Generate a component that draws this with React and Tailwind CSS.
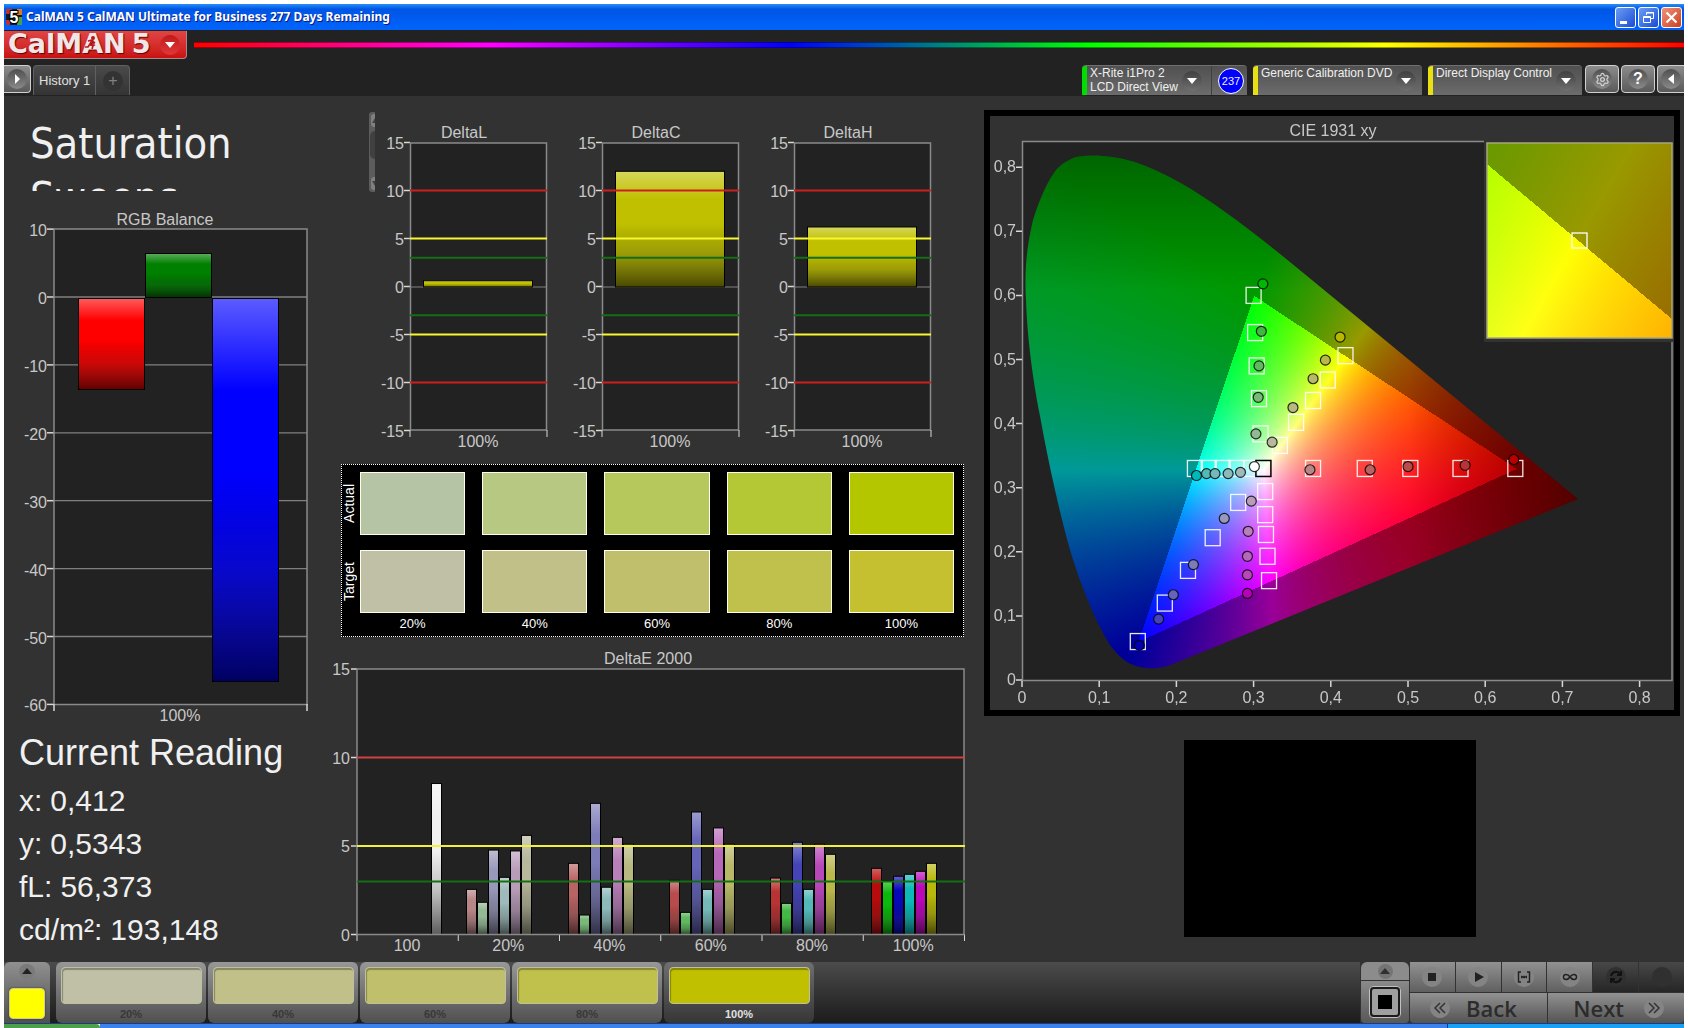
import React, { useEffect, useRef } from 'react';
import { Settings } from 'lucide-react';

const SATURATIONS = ['20%', '40%', '60%', '80%', '100%'];
const ACTUAL = ['#b6c4a6', '#b6c882', '#b6c85c', '#b4c836', '#b4c600'];
const TARGET = ['#c0c0a6', '#c0c088', '#c0c06c', '#c0c04c', '#c4c030'];
const STEPS = ['#c0c0a6', '#c0c088', '#c0c06c', '#c0c04c', '#c0c000'];

const READINGS = [
  { label: 'x', value: '0,412' },
  { label: 'y', value: '0,5343' },
  { label: 'fL', value: '56,373' },
  { label: 'cd/m²', value: '193,148' },
];

const DELTA_E = [
  { label: '100', bars: [[6, 8.53, '#f0f0f0']] },
  {
    label: '20%',
    bars: [[0, 2.55, '#b88686'], [1, 1.82, '#94b894'], [2, 4.77, '#9898ba'], [3, 3.23, '#9ebaba'], [4, 4.72, '#b89cb8'], [5, 5.6, '#b8b89c']],
  },
  {
    label: '40%',
    bars: [[0, 4.02, '#b86464'], [1, 1.1, '#78b878'], [2, 7.41, '#7c7cb8'], [3, 2.67, '#8cbaba'], [4, 5.49, '#b880b8'], [5, 5.1, '#b8b880']],
  },
  {
    label: '60%',
    bars: [[0, 3.06, '#b84c4c'], [1, 1.25, '#60b860'], [2, 6.92, '#6464b8'], [3, 2.55, '#74b8b8'], [4, 6.02, '#b868b8'], [5, 5.1, '#b8b868']],
  },
  {
    label: '80%',
    bars: [[0, 3.19, '#b83434'], [1, 1.76, '#44b844'], [2, 5.21, '#4444b8'], [3, 2.55, '#54b8b8'], [4, 5.1, '#b848b8'], [5, 4.53, '#b8b84c']],
  },
  {
    label: '100%',
    bars: [[0, 3.74, '#b80c0c'], [1, 3.05, '#0cb80c'], [2, 3.29, '#0808b8'], [3, 3.4, '#0cb8b8'], [4, 3.57, '#b808b8'], [5, 4.02, '#b8b80c']],
  },
];

const CIE_TARGETS = [
  [0.3, 0.6], [0.302, 0.542], [0.304, 0.49], [0.307, 0.439], [0.309, 0.384],
  [0.419, 0.506], [0.396, 0.468], [0.377, 0.436], [0.355, 0.402], [0.334, 0.366],
  [0.224, 0.33], [0.242, 0.33], [0.26, 0.33], [0.278, 0.33], [0.297, 0.33],
  [0.28, 0.277], [0.247, 0.222], [0.215, 0.171], [0.185, 0.12], [0.15, 0.06],
  [0.315, 0.294], [0.315, 0.258], [0.316, 0.227], [0.318, 0.193], [0.32, 0.155],
  [0.377, 0.33], [0.444, 0.33], [0.503, 0.33], [0.568, 0.33], [0.639, 0.33],
];

const CIE_READINGS = [
  [0.312, 0.618, '#00b800'], [0.31, 0.544, '#40b840'], [0.307, 0.49, '#60b860'], [0.306, 0.441, '#78b878'], [0.303, 0.384, '#94b894'],
  [0.412, 0.535, '#b8b800'], [0.393, 0.499, '#b8b84c'], [0.377, 0.47, '#b8b868'], [0.351, 0.425, '#b8b880'], [0.324, 0.371, '#b8b89c'],
  [0.226, 0.319, '#00b8b8'], [0.239, 0.322, '#54b8b8'], [0.25, 0.322, '#74b8b8'], [0.267, 0.322, '#8cbaba'], [0.283, 0.324, '#9ebaba'],
  [0.262, 0.252, '#9898ba'], [0.222, 0.18, '#7c7cb8'], [0.196, 0.133, '#6464b8'], [0.177, 0.095, '#4444b8'], [0.152, 0.054, '#0000b0'],
  [0.297, 0.279, '#b89cb8'], [0.293, 0.232, '#b880b8'], [0.292, 0.193, '#b868b8'], [0.292, 0.164, '#b848b8'], [0.292, 0.135, '#b800b8'],
  [0.373, 0.328, '#b88686'], [0.451, 0.328, '#b86464'], [0.5, 0.333, '#b84c4c'], [0.574, 0.335, '#b83434'], [0.637, 0.344, '#b80000'],
  [0.301, 0.333, '#ffffff'],
];

// plot area of the chromaticity chart, in view box units
const CIE = { w: 684, h: 594, left: 32, top: 25, right: 682, bottom: 564, sx: 772, sy: 641 };
const INSET = { x: 497, y: 27, w: 185, h: 195, cx: 0.42, cy: 0.505, span: 0.052 };
const LOCUS =
  'M86 41 C80 43 72 47 66 54 C57 66 50 82 43 104 C35 138 35 160 36 184 C37 214 41 254 50 300 C59 350 70 398 80 434 C92 474 106 506 120 529 C134 548 144 550 156 552 C166 553 172 552 183 548 L588 383 L418 243 L300 146 C268 120 242 100 215 82 C185 62 150 44 122 41 C110 39 96 39 86 41 Z';

const cieX = (x) => CIE.left + x * CIE.sx;
const cieY = (y) => CIE.bottom - y * CIE.sy;

function xyColor(x, y) {
  const yy = Math.max(y, 0.001);
  const X = x / yy;
  const Z = (1 - x - yy) / yy;
  const lin = [
    3.2406 * X - 1.5372 - 0.4986 * Z,
    -0.9689 * X + 1.8758 + 0.0415 * Z,
    0.0557 * X - 0.204 + 1.057 * Z,
  ];
  const inside = lin.every((c) => c >= 0);
  const max = Math.max(...lin);
  let level = inside ? 255 : 153;
  if (x > 0.5) level *= 1 - 2.1 * (x - 0.5);
  if (y > 0.61) level *= 1 - 1.6 * (y - 0.61);
  return lin.map((c) => (Math.max(c, 0) / max) * level);
}

function paint(width, height, toXy) {
  const buffer = document.createElement('canvas');
  buffer.width = width;
  buffer.height = height;
  const ctx = buffer.getContext('2d');
  const image = ctx.createImageData(width, height);
  for (let py = 0; py < height; py++) {
    for (let px = 0; px < width; px++) {
      const [x, y] = toXy(px, py);
      const [r, g, b] = xyColor(x, y);
      const i = (py * width + px) * 4;
      image.data[i] = r;
      image.data[i + 1] = g;
      image.data[i + 2] = b;
      image.data[i + 3] = 255;
    }
  }
  ctx.putImageData(image, 0, 0);
  return buffer;
}

function Gloss() {
  return (
    <defs>
      <linearGradient id="gloss" x1="0" y1="0" x2="0" y2="1">
        <stop offset="0" stopColor="#fff" stopOpacity="0.36" />
        <stop offset="0.24" stopColor="#fff" stopOpacity="0" />
        <stop offset="0.45" stopColor="#000" stopOpacity="0" />
        <stop offset="0.7" stopColor="#222" stopOpacity="0.22" />
        <stop offset="1" stopColor="#000" stopOpacity="0.62" />
      </linearGradient>
    </defs>
  );
}

function Bar({ x, y, width, height, color }) {
  return (
    <g>
      <rect x={x} y={y} width={width} height={height} fill={color} />
      <rect x={x} y={y} width={width} height={height} fill="url(#gloss)" stroke="#000" />
    </g>
  );
}

function RgbBalance() {
  const toY = (v) => 89 - v * 6.79;
  return (
    <svg viewBox="0 0 330 520" className="block w-full text-base" role="img" aria-label="RGB Balance">
      <Gloss />
      <text x="161" y="17" textAnchor="middle" fill="#c8c8c8">RGB Balance</text>
      <rect x="50" y="21" width="253" height="475" fill="#222" />
      {[0, -10, -20, -30, -40, -50].map((v) => (
        <path key={v} d={`M50 ${toY(v)}H303`} stroke="#808080" strokeWidth="1.3" />
      ))}
      {[10, 0, -10, -20, -30, -40, -50, -60].map((v) => (
        <g key={v}>
          <path d={`M43 ${toY(v)}H50`} stroke="#d8d8d8" strokeWidth="1.5" />
          <text x="43" y={toY(v) + 7} textAnchor="end" fill="#c8c8c8">{v}</text>
        </g>
      ))}
      <rect x="50" y="21" width="253" height="475.5" fill="none" stroke="#8a8a8a" strokeWidth="1.5" />
      <path d="M50 496v7M303 496v7" stroke="#d8d8d8" strokeWidth="1.5" />
      <Bar x={74.5} y={90.5} width={66} height={91} color="#ff0000" />
      <Bar x={141.5} y={45.5} width={66} height={44} color="#008000" />
      <Bar x={208.5} y={90.5} width={66} height={383} color="#0000ff" />
      <text x="176" y="513" textAnchor="middle" fill="#c8c8c8">100%</text>
    </svg>
  );
}

function DeltaChart({ title, value }) {
  const toY = (v) => 174.5 - v * 9.6;
  return (
    <svg viewBox="0 0 192 340" className="block w-0 flex-1 text-base" role="img" aria-label={title}>
      <text x="86" y="26" textAnchor="middle" fill="#c8c8c8">{title}</text>
      <rect x="32" y="31" width="137" height="287" fill="#222" />
      <path d={`M32 ${toY(0) + 0.5}H169`} stroke="#808080" />
      {[15, 10, 5, 0, -5, -10, -15].map((v) => (
        <g key={v}>
          <path d={`M26 ${toY(v)}H32`} stroke="#d8d8d8" strokeWidth="1.5" />
          <text x="26" y={toY(v) + 6} textAnchor="end" fill="#c8c8c8">{v}</text>
        </g>
      ))}
      <rect x="32.5" y="31" width="136" height="287" fill="none" stroke="#8a8a8a" strokeWidth="1.5" />
      <path d="M32 318v7M169 318v7" stroke="#d8d8d8" />
      <Bar x={45.5} y={toY(value)} width={109} height={value * 9.6 + 0.5} color="#c0c000" />
      {[[10, '#cc2020'], [5, '#f8f830'], [3, '#146e14'], [-3, '#146e14'], [-5, '#f8f830'], [-10, '#cc2020']].map(([v, color]) => (
        <path key={v} d={`M32 ${toY(v)}H169`} stroke={color} strokeWidth="2" />
      ))}
      <text x="100" y="335" textAnchor="middle" fill="#c8c8c8">100%</text>
    </svg>
  );
}

function DeltaE() {
  const toY = (v) => 295.5 - v * 17.7;
  return (
    <svg viewBox="0 0 646 318" className="block w-full overflow-visible text-base" role="img" aria-label="DeltaE 2000">
      <text x="314" y="25" textAnchor="middle" fill="#c8c8c8">DeltaE 2000</text>
      <rect x="23" y="30" width="607.5" height="265.5" fill="#222" />
      {[15, 10, 5, 0].map((v) => (
        <g key={v}>
          <path d={`M17 ${toY(v)}H23`} stroke="#d8d8d8" strokeWidth="1.5" />
          <text x="16" y={toY(v) + 6} textAnchor="end" fill="#c8c8c8">{v}</text>
        </g>
      ))}
      {DELTA_E.map((group, i) => {
        const left = 23 + i * 101.25;
        return (
          <g key={group.label}>
            {group.bars.map(([slot, value, color]) => (
              <Bar key={slot} x={Math.round(left + 9 + slot * 11) - 0.5} y={toY(value)} width={10} height={value * 17.7} color={color} />
            ))}
            <path d={`M${left} 295v7`} stroke="#d8d8d8" />
            <text x={left + 50} y="312" textAnchor="middle" fill="#c8c8c8">{group.label}</text>
          </g>
        );
      })}
      <path d="M630.5 295v7" stroke="#d8d8d8" />
      <rect x="23" y="30" width="607" height="265.5" fill="none" stroke="#8a8a8a" strokeWidth="1.5" />
      <path d={`M23 ${toY(10)}H631`} stroke="#d04040" strokeWidth="2" />
      <path d={`M23 ${toY(5)}H631`} stroke="#f0f040" strokeWidth="2" />
      <path d={`M23 ${toY(3)}H631`} stroke="#146e14" strokeWidth="2" />
    </svg>
  );
}

function SwatchRow({ label, colors }) {
  return (
    <div className="flex">
      <div className="flex w-[18px] items-center">
        <span className="rotate-180 text-sm leading-[14px] [writing-mode:vertical-rl]">{label}</span>
      </div>
      <div className="grid flex-1 grid-cols-5 gap-[17px]">
        {colors.map((color) => (
          <div key={color} className="h-[63px] border border-[#ffffe8]" style={{ backgroundColor: color }} />
        ))}
      </div>
    </div>
  );
}

function SwatchPanel() {
  return (
    <div className="mt-3 mr-4 ml-[7px] flex flex-col gap-[15px] border border-dotted border-white bg-black pt-[7px] pr-[9px] pb-[3px] text-white">
      <SwatchRow label="Actual" colors={ACTUAL} />
      <div>
        <SwatchRow label="Target" colors={TARGET} />
        <div className="grid grid-cols-5 gap-[17px] pt-[2px] pl-[18px] text-center text-[13px] leading-[18px]">
          {SATURATIONS.map((s) => (
            <span key={s}>{s}</span>
          ))}
        </div>
      </div>
    </div>
  );
}

function CieChart() {
  const canvasRef = useRef(null);

  useEffect(() => {
    const ctx = canvasRef.current.getContext('2d');
    ctx.fillStyle = '#222222';
    ctx.fillRect(CIE.left, CIE.top, CIE.right - CIE.left, CIE.bottom - CIE.top);
    const gamut = paint(CIE.w, CIE.h, (px, py) => [(px - CIE.left) / CIE.sx, (CIE.bottom - py) / CIE.sy]);
    ctx.save();
    ctx.clip(new Path2D(LOCUS));
    ctx.drawImage(gamut, 0, 0);
    ctx.restore();
    ctx.fillStyle = '#323232';
    ctx.fillRect(INSET.x - 3, 0, 190, INSET.y + INSET.h + 4);
    const inset = paint(INSET.w, INSET.h, (px, py) => [
      INSET.cx + (px / INSET.w - 0.5) * INSET.span,
      INSET.cy - (py / INSET.h - 0.5) * INSET.span,
    ]);
    ctx.drawImage(inset, INSET.x, INSET.y);
  }, []);

  const ticks = [0, 1, 2, 3, 4, 5, 6, 7, 8];
  const name = (t) => (t === 0 ? '0' : `0,${t}`);

  return (
    <div className="relative mt-[14px] mr-1 ml-1 border-6 border-black bg-[#323232]">
      <canvas ref={canvasRef} width={CIE.w} height={CIE.h} className="absolute inset-0 h-full w-full" />
      <svg viewBox="0 0 684 594" className="relative block w-full text-base" role="img" aria-label="CIE 1931 xy">
        <text x="343" y="20" textAnchor="middle" fill="#c8c8c8">CIE 1931 xy</text>
        <path d="M494 25.5H32.5V564.5H682V226" fill="none" stroke="#8a8a8a" strokeWidth="1.5" />
        {ticks.map((t) => (
          <g key={t} fill="#c8c8c8">
            <path d={`M${cieX(t / 10)} 565v6M26 ${cieY(t / 10)}h6`} stroke="#d8d8d8" strokeWidth="1.5" />
            <text x={cieX(t / 10)} y="587" textAnchor="middle">{name(t)}</text>
            <text x="26" y={cieY(t / 10) + 5} textAnchor="end">{name(t)}</text>
          </g>
        ))}
        <rect x="497" y="27" width="185" height="195" fill="none" stroke="#a8a878" strokeWidth="1.5" />
        {CIE_TARGETS.map(([x, y], i) => (
          <rect key={i} x={cieX(x) - 7.5} y={cieY(y) - 8} width="15" height="16" fill="none" stroke="#fff" strokeOpacity="0.9" strokeWidth="1.3" />
        ))}
        <rect x={cieX(0.3127) - 7.5} y={cieY(0.33) - 8} width="15" height="16" fill="none" stroke="#000" strokeWidth="1.5" />
        {CIE_READINGS.map(([x, y, color], i) => (
          <circle key={i} cx={cieX(x)} cy={cieY(y)} r="5" fill={color} stroke="#000" strokeOpacity="0.8" strokeWidth="1.2" />
        ))}
        <rect x="582" y="117" width="15" height="15" fill="none" stroke="#fff" strokeWidth="1.3" />
      </svg>
    </div>
  );
}

function Arrow({ direction }) {
  const paths = { down: 'M0 0h10L5 6z', up: 'M0 6h10L5 0z', left: 'M8 0v10L2 5z', right: 'M3 0v10L8 5z' };
  return (
    <svg viewBox="0 0 10 10" className={direction === 'down' || direction === 'up' ? 'mt-1 size-[10px]' : 'size-[10px]'}>
      <path d={paths[direction]} fill="currentColor" />
    </svg>
  );
}

function DeviceTab({ children, className, stripe, badge }) {
  return (
    <button type="button" aria-haspopup="menu" className={`flex h-[30px] overflow-hidden rounded-t border-t border-[#707070] bg-linear-to-b from-[#505050] to-[#6c6c6c] text-left text-xs leading-[14px] text-[#f0f0f0] ${className}`}>
      <span className={`mr-[3px] h-full w-[5px] ${stripe}`} />
      <span className="flex-1 whitespace-pre">{children}</span>
      <span className={`mt-[5px] flex size-[20px] items-center justify-center rounded-full bg-linear-to-b from-[#404040] to-[#707070] text-white ${badge ? 'mr-[9px]' : 'mr-[6px]'}`}>
        <Arrow direction="down" />
      </span>
      {badge && (
        <span className="flex h-full items-center border-l border-[#404040] pr-[3px] pl-[6px]">
          <span className="flex size-[26px] items-center justify-center rounded-full border border-white bg-[#0000ff] text-[11px]">{badge}</span>
        </span>
      )}
    </button>
  );
}

function SquareButton({ label, children, className }) {
  return (
    <button type="button" aria-label={label} className={`flex h-[28px] items-center justify-center border border-[#d0d0d0] bg-linear-to-b from-[#8c8c8c] to-[#5a5a5a] text-white ${className}`}>
      <span className="flex size-[20px] items-center justify-center rounded-full bg-linear-to-b from-[#505050] to-[#8a8a8a]">{children}</span>
    </button>
  );
}

function TitleBar() {
  return (
    <div className="flex h-[26px] items-center bg-linear-to-b from-[#2a8cf8] via-[#0055e5] via-20% to-[#0064fc] pr-[2px] pl-[2px]">
      <svg viewBox="0 0 16 16" className="size-4">
        <rect width="16" height="16" fill="#181818" />
        <path d="M0 0h6v5H0zM0 11h4v5H0z" fill="#c03030" />
        <path d="M11 0h5v6h-5z" fill="#e07828" />
        <path d="M12 8h4v8h-5z" fill="#48a048" />
        <text x="8" y="14" textAnchor="middle" fontSize="16" fontWeight="bold" fill="#fff" stroke="#000" strokeWidth="2" paintOrder="stroke">5</text>
      </svg>
      <h1 className="ml-1 flex-1 font-['Noto_Sans',sans-serif] text-xs font-bold text-white [text-shadow:1px_1px_#0a1883]">
        CalMAN 5 CalMAN Ultimate for Business 277 Days Remaining
      </h1>
      <div className="flex gap-[2px]">
        <button type="button" aria-label="Minimize" className="size-[21px] rounded-[3px] border border-white bg-linear-to-br from-[#6c9cf4] to-[#1c48d4]">
          <svg viewBox="0 0 19 19"><path d="M4 13h7v3H4z" fill="#fff" /></svg>
        </button>
        <button type="button" aria-label="Restore" className="size-[21px] rounded-[3px] border border-white bg-linear-to-br from-[#6c9cf4] to-[#1c48d4]">
          <svg viewBox="0 0 19 19" fill="none" stroke="#fff"><path d="M7.500 7V4.500h7v6H12M7 5h8M4.500 8.500h7v6h-7zM4 9.500h8" /></svg>
        </button>
        <button type="button" aria-label="Close" className="size-[21px] rounded-[3px] border border-white bg-linear-to-br from-[#f09078] to-[#cc3c14]">
          <svg viewBox="0 0 19 19"><path d="M4.500 4.500l10 10M14.500 4.500l-10 10" stroke="#fff" strokeWidth="2.200" /></svg>
        </button>
      </div>
    </div>
  );
}

function Toolbar() {
  return (
    <header className="bg-[#222]">
      <div className="flex h-[35px] items-start gap-[7px] pt-px">
        <button type="button" aria-label="CalMAN menu" className="relative flex h-[28px] w-[183px] items-end overflow-hidden rounded-br border-r border-b border-[#a88] bg-linear-to-b from-[#e04444] to-[#c81010] pl-1 font-['DejaVu_Sans',sans-serif] text-[27px] leading-[28px] font-bold text-[#f0e8e8] [text-shadow:1px_1px_1px_#600]">
          <span>CalMAN</span>
          <span className="ml-[6px]">5</span>
          <svg viewBox="0 0 12 14" className="absolute top-[5px] left-[81px] h-[14px] w-3" fill="none" stroke="#b81818" strokeWidth="1.6">
            <circle cx="8" cy="2" r="1.200" fill="#b81818" />
            <path d="M7 4L5 8l3 2-1 3M5 8l-2 3H0M7 4L3 5M7 5l3 2" />
          </svg>
          <span className="absolute top-[4px] right-[6px] flex size-[20px] items-center justify-center rounded-full bg-linear-to-b from-[#c01818] to-[#e03838] text-white">
            <Arrow direction="down" />
          </span>
        </button>
        <div className="mt-[11px] h-[6px] flex-1 border-y border-black/40 bg-[linear-gradient(to_right,#f00,#f0f_20%,#00f_40%,#0f0_60%,#ff0_80%,#f00)]" />
      </div>
      <div className="flex h-[31px] items-start">
        <SquareButton label="Show layout panel" className="w-[27px] rounded-r border-l-0"><Arrow direction="right" /></SquareButton>
        <div className="ml-[2px] flex h-[30px] rounded-t border border-b-0 border-[#606060] bg-linear-to-b from-[#4a4a4a] to-[#343434] text-[13px] text-[#e0e0e0]">
          <button type="button" className="border-r border-[#606060] px-[5px]">History 1</button>
          <button type="button" aria-label="Add history" className="flex w-[33px] items-center justify-center text-[#808080]">
            <span className="flex size-[20px] items-center justify-center rounded-full bg-[#333] text-base">+</span>
          </button>
        </div>
        <div className="ml-auto flex">
          <DeviceTab className="w-[165px]" stripe="bg-[#0d0]" badge="237">{'X-Rite i1Pro 2\nLCD Direct View'}</DeviceTab>
          <DeviceTab className="ml-[6px] w-[169px]" stripe="bg-[#e8e010]">Generic Calibration DVD</DeviceTab>
          <DeviceTab className="ml-[6px] w-[154px]" stripe="bg-[#e8e010]">Direct Display Control</DeviceTab>
          <SquareButton label="Settings" className="ml-[3px] w-[34px] rounded"><Settings size={15} className="text-[#d0d0d0]" /></SquareButton>
          <SquareButton label="Help" className="ml-[2px] w-[34px] rounded"><span className="text-base leading-4 font-bold">?</span></SquareButton>
          <SquareButton label="Show side panel" className="ml-[2px] w-[27px] rounded-l border-r-0"><Arrow direction="left" /></SquareButton>
        </div>
      </div>
    </header>
  );
}

function ControlButton({ label, disabled, children }) {
  return (
    <button
      type="button"
      aria-label={label}
      disabled={disabled}
      className={`flex h-[30px] items-center justify-center ${disabled ? 'bg-linear-to-b from-[#484848] to-[#262626]' : 'bg-linear-to-b from-[#929292] to-[#606060]'}`}
    >
      <svg viewBox="0 0 20 20" className="size-[20px]" fill="none" stroke="#222" strokeWidth="1.5">
        <circle cx="10" cy="10" r="10" fill={disabled ? '#303030' : '#848484'} stroke="none" />
        {children}
      </svg>
    </button>
  );
}

function BottomBar() {
  return (
    <footer className="flex h-[61px] bg-linear-to-b from-[#4c4c4c] to-[#1c1c1c]">
      <button type="button" aria-label="Current pattern" className="flex w-[46px] flex-col items-center rounded-t-md bg-linear-to-b from-[#909090] to-[#505050]">
        <span className="mt-[2px] flex h-[15px] w-4 items-start justify-center rounded-full bg-[#7a7a7a] text-[#222]"><Arrow direction="up" /></span>
        <span className="mt-[9px] h-[31px] w-[36px] rounded border border-[#d0d080] bg-[#ffff00] shadow-[0_0_2px_#333]" />
      </button>
      <div className="ml-[6px] flex gap-[2px]">
        {SATURATIONS.map((s, i) => {
          const current = i === 4;
          return (
            <button
              key={s}
              type="button"
              aria-pressed={current}
              className={`flex w-[150px] flex-col items-center rounded-md pt-[5px] text-[11px] leading-4 font-bold ${current ? 'bg-linear-to-b from-[#707070] to-[#363636] text-[#e0e0e0]' : 'bg-linear-to-b from-[#989898] to-[#505050] text-[#383838]'}`}
            >
              <span className="mb-[2px] h-[37px] w-[141px] rounded border border-[#c0c0a0] shadow-[inset_1px_2px_1px_rgba(0,0,0,0.3)]" style={{ backgroundColor: STEPS[i] }} />
              {s}
            </button>
          );
        })}
      </div>
      <div className="ml-auto flex gap-px bg-[#323232] pl-px">
        <div className="flex w-[48px] flex-col gap-px">
          <button type="button" aria-label="Pattern window options" className="flex h-[18px] items-center justify-center rounded-t-md bg-[#8c8c8c] text-[#303030]">
            <span className="flex size-[15px] items-start justify-center rounded-full bg-[#747474]"><Arrow direction="up" /></span>
          </button>
          <button type="button" aria-label="Pattern window" className="flex flex-1 items-center justify-center rounded-b bg-linear-to-b from-[#8a8a8a] to-[#585858]">
            <span className="flex size-[32px] items-center justify-center rounded border border-[#c0c0c0] bg-[#1c1c1c]">
              <span className="flex size-[26px] items-center justify-center rounded-[2px] bg-[#a0a0a0]">
                <span className="size-[14px] bg-black" />
              </span>
            </span>
          </button>
        </div>
        <div className="w-[274px]">
          <div className="grid grid-cols-6 gap-px">
            <ControlButton label="Stop"><path d="M6 6h8v8H6z" fill="#222" stroke="none" /></ControlButton>
            <ControlButton label="Read"><path d="M7 5l9 5-9 5z" fill="#222" stroke="none" /></ControlButton>
            <ControlButton label="Read series"><path d="M7 5H4.500v10H7M13 5h2.500v10H13M7 10h6" /><path d="M7 10h6" strokeDasharray="1.500 1" strokeWidth="2.500" /></ControlButton>
            <ControlButton label="Read continuous"><path d="M10 10C8 7 3.500 6.500 3.500 10S8 13 10 10s6.500-3.500 6.500 0S12 13 10 10z" /></ControlButton>
            <ControlButton label="Repeat" disabled><path d="M5 9a5 5 0 0 1 9-2M15 11a5 5 0 0 1-9 2M15 4v4h-4M5 16v-4h4" stroke="#111" strokeWidth="2" /></ControlButton>
            <ControlButton label="Record" disabled />
          </div>
          <div className="mt-px grid grid-cols-2 gap-px font-['Open_Sans',sans-serif] text-[22px] leading-[30px] font-semibold text-[#2c2c2c]">
            <button type="button" className="flex h-[30px] items-center gap-4 rounded-bl bg-linear-to-b from-[#929292] to-[#545454] pl-5">
              <svg viewBox="0 0 20 20" className="size-[20px]" fill="none" stroke="#333" strokeWidth="1.500">
                <circle cx="10" cy="10" r="10" fill="#848484" stroke="none" />
                <path d="M10 5l-5 5 5 5M15 5l-5 5 5 5" />
              </svg>
              Back
            </button>
            <button type="button" className="flex h-[30px] items-center justify-end gap-5 rounded-br bg-linear-to-b from-[#929292] to-[#545454] pr-5">
              Next
              <svg viewBox="0 0 20 20" className="size-[20px]" fill="none" stroke="#333" strokeWidth="1.500">
                <circle cx="10" cy="10" r="10" fill="#848484" stroke="none" />
                <path d="M5 5l5 5-5 5M10 5l5 5-5 5" />
              </svg>
            </button>
          </div>
        </div>
      </div>
    </footer>
  );
}

export default function App() {
  return (
    <div className="flex min-h-screen flex-col bg-white px-1 pt-1 font-['Liberation_Sans',Arial,sans-serif]">
      <TitleBar />
      <Toolbar />
      <main className="grid flex-1 grid-cols-[330fr_646fr_704fr] items-start bg-[#323232]">
        <section>
          <h2 className="h-[95px] overflow-hidden pt-5 pl-[26px] font-['DejaVu_Sans_Condensed','DejaVu_Sans',sans-serif] text-[43px] leading-[54px] text-[#f0f0f0]">
            Saturation
            <br />
            Sweeps
          </h2>
          <div className="mt-[17px]">
            <RgbBalance />
          </div>
          <div className="mt-[5px] pl-[15px] text-[#f0f0f0]">
            <h3 className="text-4xl">Current Reading</h3>
            <dl className="mt-[6px] text-3xl leading-[43px]">
              {READINGS.map((r) => (
                <div key={r.label} className="flex gap-2">
                  <dt>{r.label}:</dt>
                  <dd>{r.value}</dd>
                </div>
              ))}
            </dl>
          </div>
        </section>

        <section>
          <div className="flex items-start pt-4 pr-[26px] pl-[35px]">
            <svg viewBox="0 0 6 80" className="mr-[3px] h-[80px] w-[6px]">
              <rect width="12" height="80" rx="3" fill="#5c5c5c" />
              <rect x="2" y="2" width="8" height="13" rx="3" fill="#808080" />
              <rect x="2" y="65" width="8" height="13" rx="3" fill="#808080" />
              <path d="M3 11l3-5v5zM3 69l3 5v-5z" fill="#444" />
              <rect x="1" y="19" width="10" height="28" rx="5" fill="#404040" />
            </svg>
            <DeltaChart title="DeltaL" value={0.6} />
            <DeltaChart title="DeltaC" value={12} />
            <DeltaChart title="DeltaH" value={6.2} />
          </div>
          <SwatchPanel />
          <div className="mt-[2px]">
            <DeltaE />
          </div>
        </section>

        <section>
          <CieChart />
          <div className="mt-6 flex justify-center pr-1">
            <div className="aspect-[294/199] w-5/12 bg-black" />
          </div>
        </section>
      </main>
      <BottomBar />
      <div className="flex h-[5px] border-t border-[#1c3c80]">
        <div className="w-[96px] rounded-tr bg-[#4ca04c]" />
        <div className="flex-1 bg-[#3c82ec]" />
        <div className="w-[237px] border-l border-[#0c3c90] bg-[#18a0f4]" />
      </div>
    </div>
  );
}
